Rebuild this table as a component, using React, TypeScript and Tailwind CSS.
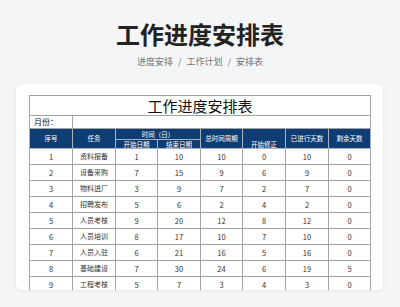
import React from 'react';

// 工作进度安排表 preview card
const rows = [
  [1, '资料报备', 1, 10, 10, 0, 10, 0],
  [2, '设备采购', 7, 15, 9, 6, 9, 0],
  [3, '物料进厂', 3, 9, 7, 2, 7, 0],
  [4, '招聘发布', 5, 6, 2, 4, 2, 0],
  [5, '人员考核', 9, 20, 12, 8, 12, 0],
  [6, '人员培训', 8, 17, 10, 7, 10, 0],
  [7, '人员入驻', 6, 21, 16, 5, 16, 0],
  [8, '基础建设', 7, 30, 24, 6, 19, 5],
  [9, '工程考核', 5, 7, 3, 4, 3, 0],
];

const colWidths = [43, 43, 42, 43, 42, 43, 43, 42];

export default function App() {
  const th = 'border border-[#a7b3c2] bg-[#0e3d74] text-white font-normal text-[6.5px] leading-none p-0 text-center';
  const td = 'border border-[#a3a3a3] h-[16px] text-[7.5px] leading-none text-[#333] text-center p-0';

  return (
    <div
      className="w-[400px] h-[307px] overflow-hidden bg-[#f4f5f7] flex flex-col items-center"
      style={{ fontFamily: '"Noto Sans CJK SC", "Noto Sans", sans-serif' }}
    >
      <h1 className="mt-[22px] text-[24px] leading-[24px] font-bold text-[#222]">工作进度安排表</h1>

      <div className="mt-[9px] flex items-center gap-[5px] text-[9px] leading-[14px] text-[#777]">
        <span>进度安排</span>
        <span>/</span>
        <span>工作计划</span>
        <span>/</span>
        <span>安排表</span>
      </div>

      <div className="mt-[15px] w-[367px] h-[206px] bg-white rounded-[6px] shadow-[0_1px_4px_rgba(0,0,0,0.06)] overflow-hidden pt-[11px] px-[13px] self-start ml-[16px]">
        <table className="table-fixed border-collapse w-[341px]">
          <colgroup>
            {colWidths.map((w, i) => (
              <col key={i} style={{ width: w }} />
            ))}
          </colgroup>
          <tbody>
            <tr>
              <td colSpan={8} className="border border-[#a3a3a3] h-[20px] p-0 text-center text-[15px] leading-none text-[#111]">
                工作进度安排表
              </td>
            </tr>
            <tr>
              <td className="border border-[#a3a3a3] h-[13px] p-0 pl-[4px] text-left text-[8px] leading-none text-[#111]">月份：</td>
              <td colSpan={7} className="border border-[#a3a3a3] h-[13px] p-0"></td>
            </tr>
            <tr>
              <th rowSpan={2} className={th}>序号</th>
              <th rowSpan={2} className={th}>任务</th>
              <th colSpan={2} className={th + ' h-[11px]'}>时间（日）</th>
              <th rowSpan={2} className={th}>总时间周期</th>
              <th rowSpan={2} className={th + ' align-bottom pb-[1px]'}>开始修正</th>
              <th rowSpan={2} className={th}>已进行天数</th>
              <th rowSpan={2} className={th}>剩余天数</th>
            </tr>
            <tr>
              <th className={th + ' h-[9px]'}>开始日期</th>
              <th className={th + ' h-[9px]'}>结束日期</th>
            </tr>
            {rows.map((r) => (
              <tr key={r[0]}>
                {r.map((v, i) => (
                  <td key={i} className={td + (i === 1 ? ' text-[7px]' : '')}>
                    {v}
                  </td>
                ))}
              </tr>
            ))}
          </tbody>
        </table>
      </div>
    </div>
  );
}
